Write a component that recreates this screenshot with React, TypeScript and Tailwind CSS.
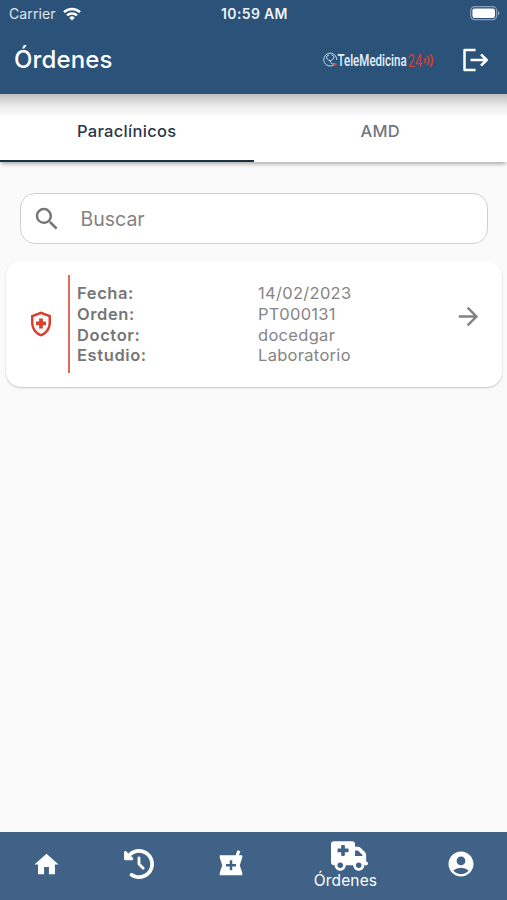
import React, { useState } from 'react';
import {
  MdAccountCircle,
  MdArrowForward,
  MdHome,
  MdLocalPharmacy,
  MdOutlineHealthAndSafety,
  MdSearch,
} from 'react-icons/md';
import { FaClockRotateLeft, FaTruckMedical } from 'react-icons/fa6';

type Order = {
  fecha: string;
  orden: string;
  doctor: string;
  estudio: string;
};

const TABS = ['Paraclínicos', 'AMD'];

const ORDERS: Order[] = [
  { fecha: '14/02/2023', orden: 'PT000131', doctor: 'docedgar', estudio: 'Laboratorio' },
];

const StatusBar: React.FC = () => (
  <div className="grid h-[27px] grid-cols-3 items-center pl-[9px] pr-[7px] text-[14px]">
    <div className="flex items-center gap-[7px]">
      <span className="text-[14px] tracking-[0.1px] text-white/85">Carrier</span>
      <svg width="18" height="14" viewBox="0 0 18 14" fill="none" stroke="white" strokeWidth="2.5">
        <path d="M1 5.2a11.4 11.4 0 0 1 16 0" />
        <path d="M4 8.4a7.2 7.2 0 0 1 10 0" />
        <path d="M9 13.6 6.2 10.7a4 4 0 0 1 5.6 0z" fill="white" stroke="none" />
      </svg>
    </div>
    <span className="text-center font-semibold tracking-[0.35px] whitespace-nowrap text-white/95">10:59 AM</span>
    <svg className="justify-self-end" width="30" height="15" viewBox="0 0 30 15">
      <rect x="0.7" y="0.7" width="26" height="13" rx="4" fill="none" stroke="white" strokeOpacity="0.45" strokeWidth="1.2" />
      <rect x="2.4" y="2.4" width="22.6" height="9.6" rx="2.2" fill="white" />
      <path d="M28 5v4.6c1.9-.8 1.9-3.8 0-4.6z" fill="white" fillOpacity="0.5" />
    </svg>
  </div>
);

const Logo: React.FC = () => (
  <svg width="112" height="32" viewBox="0 -6 112 32" fontFamily="Roboto, sans-serif">
    <g fill="none" stroke="#c3d8ea" strokeWidth="1">
      <path d="M11.5 14.5A6.5 6.5 0 1 1 13.7 10" />
      <path d="M3.5 6c0 3 1.5 4.5 3.7 4.5S11 9 11 6M4 6l2-1M10.5 6l-2-1M7.2 10.500c0 3 1.800 3.800 4.300 3.400" />
    </g>
    <circle cx="12" cy="14.2" r="1.5" fill="#e2473c" />
    <text transform="translate(14.500 16.300) scale(0.68 1)" fontSize="17" fontWeight="500" fill="#e4f1fb">TeleMedicina</text>
    <text transform="translate(84.800 17.300) scale(0.67 1)" fontSize="19" fill="#d8402f">24</text>
    <g fill="none" stroke="#cf4438" strokeWidth="1.7">
      <path d="M101.5 8q2 2.500 0 5" />
      <path d="M104.3 6q3.400 4.500 0 9" />
      <path d="M107.5 4.300q4.500 6.200 0 12.400" />
    </g>
  </svg>
);

const Header: React.FC = () => (
  <header className="relative z-20 h-[94px] bg-[#2b5279] text-white">
    <StatusBar />
    <div className="flex h-[66px] items-center pl-[14px] pr-[18.5px]">
      <h1 className="flex-1 text-[24px] font-medium tracking-[0.15px]">Órdenes</h1>
      <Logo />
      <button type="button" aria-label="Salir" className="ml-[27px]">
        <svg width="27" height="24" viewBox="0 0 27 24" fill="none" stroke="white" strokeWidth="2.5" strokeLinejoin="round">
          <path d="M13.5 2H2.5v20h11" />
          <path d="M8.5 12h16M19 6.3l5.7 5.7-5.7 5.7" />
        </svg>
      </button>
    </div>
  </header>
);

const Tabs: React.FC<{ active: string; onChange: (tab: string) => void }> = ({ active, onChange }) => (
  <div className="relative z-10 flex h-[68px] bg-white shadow-[0_3px_4px_-1px_rgba(0,0,0,0.32)]">
    {/* shadow cast by the header over the tabs */}
    <div className="pointer-events-none absolute inset-x-0 top-0 h-[24px] bg-gradient-to-b from-black/25 via-black/8 to-transparent" />
    {TABS.map((tab) => (
      <button
        key={tab}
        type="button"
        onClick={() => onChange(tab)}
        className={
          tab === active
            ? 'flex-1 border-b-2 border-[#1c303f] pt-[8px] text-[16.5px] font-medium tracking-[0.3px] text-[#2b3648]'
            : 'flex-1 border-b-2 border-transparent pt-[8px] text-[16.5px] font-medium tracking-[0.3px] text-[#71757f]'
        }
      >
        {tab}
      </button>
    ))}
  </div>
);

const OrderCard: React.FC<{ order: Order }> = ({ order }) => {
  const rows = [
    ['Fecha:', order.fecha],
    ['Orden:', order.orden],
    ['Doctor:', order.doctor],
    ['Estudio:', order.estudio],
  ];

  return (
    <div className="mr-[5px] ml-[6px] flex h-[126px] items-center rounded-[15px] bg-white shadow-[0_1px_2px_rgba(0,0,0,0.22)]">
      <MdOutlineHealthAndSafety size={30} className="ml-[20px] text-[#d8402f]" />
      <div className="ml-[12px] h-[98px] w-[1.5px] bg-[#e0695d]" />
      <dl className="ml-[7.5px] flex-1 pt-[1px] text-[16.5px] leading-[20.8px]">
        {rows.map(([label, value]) => (
          <div key={label} className="flex">
            <dt className="w-[181px] font-semibold tracking-[0.6px] text-[#767676]">{label}</dt>
            <dd className="tracking-[0.3px] text-[#858585]">{value}</dd>
          </div>
        ))}
      </dl>
      <MdArrowForward size={29} className="mr-[19px] mb-[16px] text-[#828282]" />
    </div>
  );
};

const BottomNav: React.FC = () => (
  <nav className="grid h-[68px] grid-cols-[93px_92px_92px_137px_93px] items-center justify-items-center bg-[#416287] text-white">
    <MdHome size={29} className="mb-[3px]" />
    <FaClockRotateLeft size={30} className="mb-[4px]" />
    <MdLocalPharmacy size={30} className="mb-[4px]" />
    <div className="flex flex-col items-center pb-px">
      <FaTruckMedical className="ml-[8px] h-[30px] w-[37px]" />
      <span className="text-[15.5px] leading-[19px] tracking-[0.15px]">Órdenes</span>
    </div>
    <MdAccountCircle size={30} className="mb-[4px]" />
  </nav>
);

const App: React.FC = () => {
  const [tab, setTab] = useState(TABS[0]);
  const [search, setSearch] = useState('');

  return (
    <main className="flex h-screen w-full flex-col overflow-hidden bg-[#fafafa] font-[Inter,'Liberation_Sans',sans-serif]">
      <Header />
      <Tabs active={tab} onChange={setTab} />
      <section className="flex-1">
        <label className="mt-[31px] mr-[19px] ml-[20px] flex h-[51px] items-center rounded-[15px] border-[1.5px] border-[#cfcfcf] bg-white pl-[10.5px]">
          <MdSearch size={30} className="shrink-0 text-[#757575]" />
          <input
            value={search}
            onChange={(e) => setSearch(e.target.value)}
            placeholder="Buscar"
            className="ml-[19px] w-full bg-transparent pt-[3px] text-[19.5px] outline-none placeholder:text-[#828282]"
          />
        </label>
        <div className="mt-[17px]">
          {ORDERS.map((order) => (
            <OrderCard key={order.orden} order={order} />
          ))}
        </div>
      </section>
      <BottomNav />
    </main>
  );
};

export default App;
